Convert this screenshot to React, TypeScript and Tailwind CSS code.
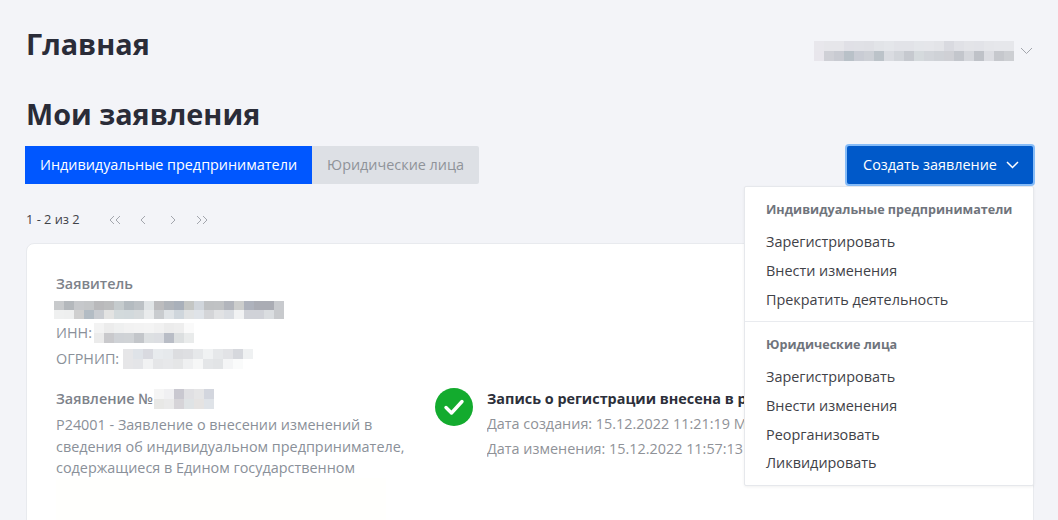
import React from 'react';

// pixelated placeholders for the blurred-out values
const Mosaic = ({ rows, cell = 10, rowH = 10, className = '' }: { rows: string[][]; cell?: number; rowH?: number; className?: string }) => (
  <div className={`flex flex-col shrink-0 ${className}`}>
    {rows.map((row, i) => (
      <div key={i} className="flex">
        {row.map((c, j) => (
          <div key={j} style={{ width: cell, height: rowH, background: c }} />
        ))}
      </div>
    ))}
  </div>
);

const userRows = [
  ['#e8e7ec', '#e6e6ea', '#e6e6ea', '#e0e0e6', '#e0e1e6', '#dfe0e5', '#e2e4e8', '#e4e6ea', '#e2e3e8', '#e2e3e8', '#e4e6ea', '#e5e6ea', '#e3e4e8', '#d9dae0', '#e0e1e6', '#e3e4e8', '#e2e3e8', '#e5e6ea', '#e6e7eb', '#e6e7eb'],
  ['#e8e6ec', '#cfd0d6', '#c9cbd2', '#b9c1c8', '#c9ccd4', '#cdd0d6', '#bcc3c9', '#dadce1', '#d2d5da', '#c6c9cf', '#d5dadd', '#d2d5da', '#cfd2d7', '#cfd0d5', '#c3c6cc', '#d5d7dc', '#bfc2c8', '#dcdde2', '#c6c8cd', '#cdcfd3'],
];

const applicantRows = [
  ['#c8cacc', '#b4b8bc', '#c6c8cb', '#c4c6c8', '#b9b9bb', '#bcbdbe', '#c5cbcd', '#b4bbc0', '#bcc1c5', '#e0e4e6', '#bcbcbe', '#b0b4ba', '#a9b0ba', '#c4c6c4', '#d0d5db', '#bfc1c3', '#c0c2c4', '#b2b5bc', '#cccdcc', '#aeb2bc', '#aaacb4', '#aaacb4', '#c8cace'],
  ['#eff0f0', '#eeefef', '#cfcfcf', '#b3bcc4', '#c9ccd1', '#e3e3e2', '#d3dadc', '#d2d9dc', '#d6dadc', '#e9ebec', '#c9cccf', '#dfe3e6', '#cfd6dc', '#e0e2e3', '#dfe3e8', '#d4d5d8', '#e1e2e4', '#dadde2', '#f1f2f3', '#d0d2d8', '#d0d2d8', '#dadde0', '#c8cacd'],
];

const innRows = [
  ['#f3f3f3', '#ececec', '#eff0f0', '#f2f2f2', '#f3f3f3', '#f4f4f4', '#f1f1f1', '#ececec', '#eeeeee', '#fafafa'],
  ['#ebebeb', '#c9c9cc', '#cfd2d6', '#d0d3d6', '#c3c6ca', '#dde0e2', '#dcdee2', '#b9bdc6', '#dcdfe0', '#e9ebeb'],
];

const ogrnRows = [
  ['#e6e6e8', '#dfe3e8', '#d9dae0', '#e8ebee', '#e6e9ec', '#dcdde0', '#dedfe2', '#e6e8ea', '#f0f2f3', '#e6e8ea', '#e2e3e6', '#d6d8dd', '#eff1f2'],
  ['#e6e6e8', '#e4e5e8', '#f1f2f3', '#e5e6e8', '#e7e8ea', '#e5e6e7', '#eff0f1', '#f6f7f7', '#e4e6e8', '#e2e4e6', '#f4f5f6', '#fafbfb', '#ffffff'],
];

const numberRows = [
  ['#f5f5f5', '#f0f0f2', '#c9c8d0', '#e0e0e3', '#e5e5e6', '#d3d6de'],
  ['#e8e8e6', '#eaeaea', '#d6d4d8', '#dfe3e5', '#e5e3e2', '#dfe3e8'],
];

const Chevron = ({ className = '', dir = 'down', weight = 1 }: { className?: string; dir?: 'down' | 'left' | 'right'; weight?: number }) => {
  const d = dir === 'down' ? 'M1 1l5.5 5.5L12 1' : dir === 'left' ? 'M5 1L1 5l4 4' : 'M1 1l4 4-4 4';
  const vb = dir === 'down' ? '0 0 13 8' : '0 0 6 10';
  return (
    <svg className={className} viewBox={vb} fill="none" stroke="currentColor" strokeWidth={weight}>
      <path d={d} />
    </svg>
  );
};

const Pager = () => (
  <div className="flex items-center text-[#a3a6ad]">
    <svg className="w-[12px] h-[10px]" viewBox="0 0 12 10" fill="none" stroke="currentColor" strokeWidth="1">
      <path d="M5 1L1 5l4 4M11 1L7 5l4 4" />
    </svg>
    <Chevron dir="left" className="w-[6px] h-[10px] ml-[19px]" />
    <Chevron dir="right" className="w-[6px] h-[10px] ml-[24px]" />
    <svg className="w-[12px] h-[10px] ml-[20px]" viewBox="0 0 12 10" fill="none" stroke="currentColor" strokeWidth="1">
      <path d="M1 1l4 4-4 4M7 1l4 4-4 4" />
    </svg>
  </div>
);

const MenuItem = ({ label }: { label: string }) => (
  <div className="h-[29px] leading-[29px] text-[14.4px] text-[#3f4248]">{label}</div>
);

const CreateMenu = () => (
  <div className="absolute top-[186px] right-[24px] w-[290px] h-[300px] bg-white border border-[#e6e8ec] rounded-[2px] shadow-[0_1px_3px_rgba(0,0,0,0.06)] z-10">
    <div className="px-[21px] pt-[13px] pb-[7px] border-b border-[#e9ebef]">
      <div className="text-[12.6px] leading-[20px] font-bold text-[#6f747c] mb-[7px] whitespace-nowrap">Индивидуальные предприниматели</div>
      <MenuItem label="Зарегистрировать" />
      <MenuItem label="Внести изменения" />
      <MenuItem label="Прекратить деятельность" />
    </div>
    <div className="px-[21px] pt-[13px]">
      <div className="text-[12.6px] leading-[20px] font-bold text-[#6f747c] mb-[7px]">Юридические лица</div>
      <MenuItem label="Зарегистрировать" />
      <MenuItem label="Внести изменения" />
      <MenuItem label="Реорганизовать" />
      <div className="-mt-px">
        <MenuItem label="Ликвидировать" />
      </div>
    </div>
  </div>
);

const Card = () => (
  <div className="mt-[13px] ml-px h-[300px] bg-white border border-[#e8eaee] rounded-t-[8px] pl-[29px] pt-[30px] flex">
    <div className="w-[379px] shrink-0 text-[14.4px] text-[#8a9099]">
      <div className="leading-[20px] font-semibold text-[#7d828a]">Заявитель</div>
      <Mosaic rows={applicantRows} rowH={9} className="-ml-[2px] mt-[7px]" />
      <div className="flex items-center h-[26px] mt-[1px] leading-[26px]">
        ИНН:
        <Mosaic rows={innRows} className="ml-[2px]" />
      </div>
      <div className="flex items-center h-[26px] leading-[26px]">
        ОГРНИП:
        <Mosaic rows={ogrnRows} className="ml-[4px]" />
      </div>
      <div className="flex items-center mt-[15px] h-[24px] font-semibold text-[#7d828a]">
        Заявление №
        <Mosaic rows={numberRows} className="ml-[1px]" />
      </div>
      <div className="mt-[3px] leading-[21.5px] w-[352px]">
        Р24001 - Заявление о внесении изменений в сведения об индивидуальном предпринимателе, содержащиеся в Едином государственном
      </div>
      <div className="mt-[-1px] w-[330px] h-[50px] bg-[#fffffd]" />
    </div>
    <div className="flex mt-[111px] min-w-0">
      <div className="w-[38px] h-[38px] mt-[3px] rounded-full bg-[#13ab2e] flex items-center justify-center shrink-0">
        <svg className="w-[22px] h-[18px]" viewBox="0 0 22 18" fill="none" stroke="#fff" strokeWidth="3.4" strokeLinecap="round" strokeLinejoin="round">
          <path d="M3 9.5l5.5 5.5L19 3.5" />
        </svg>
      </div>
      {/* the rest of these lines is hidden by the open menu */}
      <div className="ml-[14px] mt-[2px] w-[257px] overflow-hidden whitespace-nowrap text-[14.4px]">
        <div className="leading-[24px] font-bold text-[#2c2f3a]">Запись о регистрации внесена в реестр</div>
        <div className="leading-[25px] text-[#8f9298]">Дата создания: 15.12.2022 11:21:19 МСК</div>
        <div className="leading-[25px] text-[#8f9298]">Дата изменения: 15.12.2022 11:57:13 МСК</div>
      </div>
    </div>
  </div>
);

export default function App() {
  return (
    <div className="relative h-[520px] overflow-hidden bg-[#f3f4f8] font-['Open_Sans',sans-serif]">
      <div className="pl-[25px] pr-[24px] pt-[22px]">
        <div className="flex items-start justify-between">
          <h1 className="pl-[1px] text-[28.8px] leading-[44px] font-bold text-[#2a2c38]">Главная</h1>
          <div className="flex items-center mt-[19px]">
            <Mosaic rows={userRows} />
            <Chevron className="w-[13px] h-[8px] ml-[6px] mr-px text-[#a3a6ad]" />
          </div>
        </div>
        <h2 className="pl-[1px] mt-[26px] text-[28.8px] leading-[44px] font-bold text-[#2a2c38]">Мои заявления</h2>
        <div className="mt-[10px] flex items-center justify-between">
          <div className="flex text-[14.4px]">
            <div className="h-[38px] leading-[38px] px-[15px] bg-[#0057ff] text-white">Индивидуальные предприниматели</div>
            <div className="h-[38px] leading-[38px] px-[15px] bg-[#dde0e5] text-[#8f9399] rounded-r-[2px]">Юридические лица</div>
          </div>
          <button className="h-[38px] w-[186px] mr-px pl-[2px] bg-[#0059c9] text-white text-[14.4px] rounded-[2px] ring-2 ring-[#86bcf8] flex items-center justify-center">
            Создать заявление
            <Chevron weight={1.5} className="w-[13px] h-[8px] ml-[9px]" />
          </button>
        </div>
        <div className="mt-[26px] h-[20px] flex items-center">
          <span className="pl-[1px] text-[12.8px] text-[#3f4248]">1 - 2 из 2</span>
          <div className="ml-[29px]">
            <Pager />
          </div>
        </div>
        <Card />
      </div>
      <CreateMenu />
    </div>
  );
}
